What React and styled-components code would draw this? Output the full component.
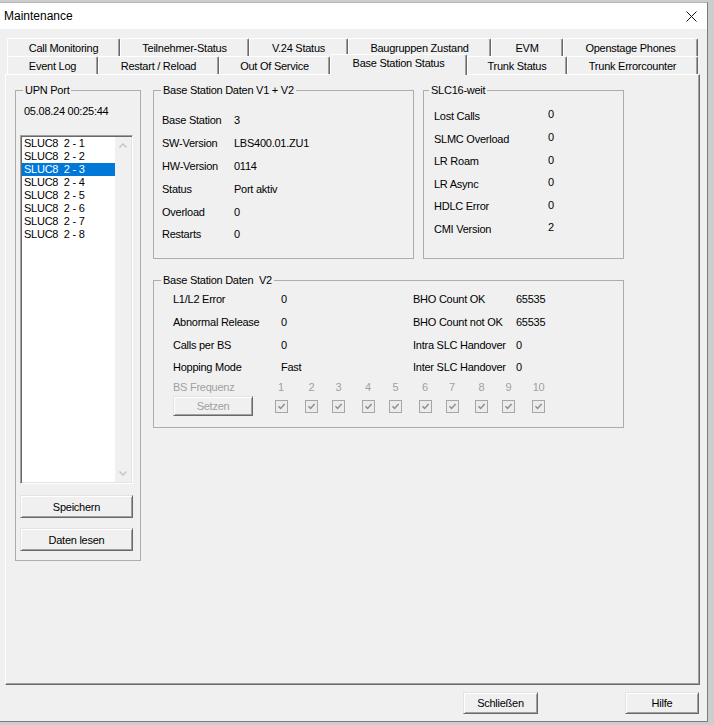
import React from "react";
import styled, { createGlobalStyle } from "styled-components";

const GlobalStyle = createGlobalStyle`
  html, body {
    margin: 0;
    padding: 0;
    background: #cdcdcd;
  }
  body {
    font-family: "Liberation Sans", Arial, sans-serif;
    font-size: 11px;
    letter-spacing: -0.25px;
    color: #000;
  }
  * {
    box-sizing: border-box;
  }
`;

const Window = styled.div`
  width: 708px;
  height: 720px;
  margin-top: 2px;
  border-top: 1px solid #b5b5b5;
  border-right: 1px solid #7a7a7a;
  border-bottom: 1px solid #7a7a7a;
  background: #f0f0f0;
  display: flex;
  flex-direction: column;
`;

const TitleBar = styled.div`
  height: 26px;
  flex: none;
  background: #fff;
  display: flex;
  align-items: center;
  justify-content: space-between;
  padding: 0 10px 0 4px;
  font-size: 12px;
  letter-spacing: 0;
`;

const Client = styled.div`
  flex: 1;
  display: flex;
  flex-direction: column;
  padding: 9px 7px 7px 5px;
`;

const TabStrip = styled.div`
  margin-left: 2px;
  display: flex;
  flex-direction: column;
`;

const TabRow = styled.div`
  display: flex;
  align-items: flex-start;
  height: 18px;
`;

const Tab = styled.div`
  flex: none;
  width: ${(p) => p.$w}px;
  height: ${(p) => (p.$active ? 21 : 18)}px;
  margin-top: ${(p) => (p.$active ? -2 : 0)}px;
  padding-top: ${(p) => (p.$active ? 2 : 3)}px;
  position: ${(p) => (p.$active ? "relative" : "static")};
  z-index: ${(p) => (p.$active ? 2 : "auto")};
  background: #f0f0f0;
  border-top: 1px solid #fff;
  border-left: 1px solid #fff;
  border-right: 1px solid #696969;
  box-shadow: inset -1px 0 0 #a0a0a0;
  border-radius: 2px 2px 0 0;
  text-align: center;
  line-height: 13px;
  white-space: nowrap;
`;

const Panel = styled.div`
  width: 695px;
  height: 611px;
  flex: none;
  display: flex;
  gap: 12px;
  padding: 9px 0 0 9px;
  border-top: 1px solid #fff;
  border-left: 1px solid #fff;
  border-right: 1px solid #696969;
  border-bottom: 1px solid #696969;
  box-shadow: inset -1px -1px 0 #a0a0a0;
`;

const Group = styled.fieldset`
  margin: ${(p) => p.$mt || 0}px 0 0 0;
  min-width: 0;
  width: ${(p) => p.$w}px;
  height: ${(p) => p.$h}px;
  padding: 0;
  border: 1px solid #adadad;
  flex: none;
`;

const Legend = styled.legend`
  margin-left: ${(p) => p.$ml ?? 7}px;
  padding: 0 2px;
  line-height: 13px;
`;

const GroupBody = styled.div`
  padding: ${(p) => p.$pad};
  display: flex;
  flex-direction: column;
  align-items: flex-start;
`;

const DateText = styled.div`
  margin-top: 8px;
  padding-left: 4px;
  line-height: 13px;
`;

const ListBox = styled.div`
  margin-top: 17px;
  width: 113px;
  height: 349px;
  display: flex;
  padding: 1px;
  background: #fff;
  border-top: 1px solid #a0a0a0;
  border-left: 1px solid #a0a0a0;
  border-right: 1px solid #fff;
  border-bottom: 1px solid #fff;
  box-shadow: inset 1px 1px 0 #696969, inset -1px -1px 0 #e3e3e3;
`;

const Items = styled.div`
  width: 93px;
  flex: none;
  display: flex;
  flex-direction: column;
`;

const Item = styled.div`
  height: 13px;
  line-height: 13px;
  padding-left: 2px;
  white-space: pre;
  background: ${(p) => (p.$selected ? "#0078d7" : "transparent")};
  color: ${(p) => (p.$selected ? "#fff" : "#000")};
`;

const ScrollBar = styled.div`
  flex: 1;
  background: #f0f0f0;
  display: flex;
  flex-direction: column;
  justify-content: space-between;
`;

const ScrollArrow = styled.div`
  height: 17px;
  display: flex;
  align-items: center;
  justify-content: center;
`;

const Button = styled.button`
  width: ${(p) => p.$w}px;
  height: ${(p) => p.$h}px;
  margin-top: ${(p) => p.$mt || 0}px;
  flex: none;
  padding: 0;
  font: inherit;
  letter-spacing: inherit;
  color: ${(p) => (p.disabled ? "#a0a0a0" : "#000")};
  background: #f0f0f0;
  border: 1px solid;
  border-color: #e3e3e3 #696969 #696969 #e3e3e3;
  box-shadow: inset 1px 1px 0 #fff, inset -1px -1px 0 #a0a0a0;
`;

const RightCol = styled.div`
  display: flex;
  flex-direction: column;
`;

const TopRow = styled.div`
  display: flex;
  gap: 9px;
`;

const InfoRow = styled.div`
  display: flex;
  align-items: center;
  height: ${(p) => p.$h}px;
`;

const Label = styled.div`
  width: ${(p) => p.$w}px;
  flex: none;
`;

const Value = styled.div`
  padding-bottom: ${(p) => p.$raise || 0}px;
`;

const V2Grid = styled.div`
  display: grid;
  grid-template-columns: 108px 132px 103px auto;
  grid-auto-rows: 22.7px;
  align-items: center;
`;

const FreqRow = styled.div`
  display: flex;
  align-items: center;
  height: ${(p) => p.$h}px;
  margin-top: ${(p) => p.$mt}px;
  color: #a0a0a0;
`;

const FreqLead = styled.div`
  width: 98px;
  flex: none;
  display: flex;
`;

const FreqCell = styled.div`
  width: 20px;
  flex: none;
  margin-left: ${(p) => p.$ml}px;
  display: flex;
  justify-content: center;
`;

const CheckBox = styled.span`
  width: 13px;
  height: 13px;
  border: 1px solid #a6a6a6;
  background: #ececec;
  display: flex;
  align-items: center;
  justify-content: center;
`;

const ButtonBar = styled.div`
  margin-top: 7px;
  height: 22px;
  display: flex;
  justify-content: flex-end;
  gap: 87px;
  padding-right: 1px;
`;

const rowOne = [
  ["Call Monitoring", 113],
  ["Teilnehmer-Status", 129],
  ["V.24 Status", 99],
  ["Baugruppen Zustand", 143],
  ["EVM", 72],
  ["Openstage Phones", 135],
];

const rowTwo = [
  ["Event Log", 91],
  ["Restart / Reload", 121],
  ["Out Of Service", 111],
  ["Base Station Status", 137, true],
  ["Trunk Status", 100],
  ["Trunk Errorcounter", 131],
];

const ports = [1, 2, 3, 4, 5, 6, 7, 8].map((n) => `SLUC8  2 - ${n}`);

const v1v2 = [
  ["Base Station", "3"],
  ["SW-Version", "LBS400.01.ZU1"],
  ["HW-Version", "0114"],
  ["Status", "Port aktiv"],
  ["Overload", "0"],
  ["Restarts", "0"],
];

const slc = [
  ["Lost Calls", "0"],
  ["SLMC Overload", "0"],
  ["LR Roam", "0"],
  ["LR Async", "0"],
  ["HDLC Error", "0"],
  ["CMI Version", "2"],
];

const v2 = [
  ["L1/L2 Error", "0", "BHO Count OK", "65535"],
  ["Abnormal Release", "0", "BHO Count not OK", "65535"],
  ["Calls per BS", "0", "Intra SLC Handover", "0"],
  ["Hopping Mode", "Fast", "Inter SLC Handover", "0"],
];

// gaps between the 20px wide frequency columns
const freqGaps = [0, 10.5, 7, 9.5, 7.5, 9.5, 7, 9.5, 7, 10];

function Chevron({ up }) {
  return (
    <svg width="8" height="5" viewBox="0 0 8 5">
      <path
        d={up ? "M0.5 4.5 L4 1 L7.5 4.5" : "M0.5 0.5 L4 4 L7.5 0.5"}
        fill="none"
        stroke="#c4c4c4"
        strokeWidth="1.4"
      />
    </svg>
  );
}

function Check() {
  return (
    <svg width="9" height="9" viewBox="0 0 9 9">
      <path d="M1.5 4.2 L3.6 6.4 L7.6 2" fill="none" stroke="#8e8e8e" strokeWidth="1.5" />
    </svg>
  );
}

export default function App() {
  return (
    <>
      <GlobalStyle />
      <Window>
        <TitleBar>
          <span>Maintenance</span>
          <svg width="11" height="11" viewBox="0 0 11 11">
            <path d="M0.5 0.5 L10.5 10.5 M10.5 0.5 L0.5 10.5" stroke="#111" strokeWidth="1" />
          </svg>
        </TitleBar>

        <Client>
          <TabStrip>
            <TabRow>
              {rowOne.map(([name, w]) => (
                <Tab key={name} $w={w}>{name}</Tab>
              ))}
            </TabRow>
            <TabRow>
              {rowTwo.map(([name, w, active]) => (
                <Tab key={name} $w={w} $active={active}>{name}</Tab>
              ))}
            </TabRow>
          </TabStrip>

          <Panel>
            <Group $w={126} $h={477}>
              <Legend>UPN Port</Legend>
              <GroupBody $pad="0 7px 0 4px">
                <DateText>05.08.24 00:25:44</DateText>
                <ListBox>
                  <Items>
                    {ports.map((p, i) => (
                      <Item key={p} $selected={i === 2}>{p}</Item>
                    ))}
                  </Items>
                  <ScrollBar>
                    <ScrollArrow><Chevron up /></ScrollArrow>
                    <ScrollArrow><Chevron /></ScrollArrow>
                  </ScrollBar>
                </ListBox>
                <Button $w={113} $h={23} $mt={11}>Speichern</Button>
                <Button $w={113} $h={23} $mt={10}>Daten lesen</Button>
              </GroupBody>
            </Group>

            <RightCol>
              <TopRow>
                <Group $w={261} $h={175}>
                  <Legend>Base Station Daten V1 + V2</Legend>
                  <GroupBody $pad="12px 0 0 8px">
                    {v1v2.map(([k, v]) => (
                      <InfoRow key={k} $h={22.8}>
                        <Label $w={72}>{k}</Label>
                        <Value>{v}</Value>
                      </InfoRow>
                    ))}
                  </GroupBody>
                </Group>
                <Group $w={201} $h={175}>
                  <Legend $ml={5}>SLC16-weit</Legend>
                  <GroupBody $pad="7.7px 0 0 10px">
                    {slc.map(([k, v]) => (
                      <InfoRow key={k} $h={22.6}>
                        <Label $w={114}>{k}</Label>
                        <Value $raise={3}>{v}</Value>
                      </InfoRow>
                    ))}
                  </GroupBody>
                </Group>
              </TopRow>

              <Group $w={471} $h={154} $mt={15}>
                <Legend>Base Station Daten&nbsp; V2</Legend>
                <GroupBody $pad="1px 0 0 19px">
                  <V2Grid>
                    {v2.map((r) =>
                      r.map((c, i) => <div key={r[0] + i}>{c}</div>)
                    )}
                  </V2Grid>
                  <FreqRow $h={13} $mt={1.5}>
                    <FreqLead>BS Frequenz</FreqLead>
                    {freqGaps.map((g, i) => (
                      <FreqCell key={i} $ml={g}>{i + 1}</FreqCell>
                    ))}
                  </FreqRow>
                  <FreqRow $h={20} $mt={3}>
                    <FreqLead>
                      <Button $w={80} $h={20} disabled>Setzen</Button>
                    </FreqLead>
                    {freqGaps.map((g, i) => (
                      <FreqCell key={i} $ml={g}>
                        <CheckBox><Check /></CheckBox>
                      </FreqCell>
                    ))}
                  </FreqRow>
                </GroupBody>
              </Group>
            </RightCol>
          </Panel>

          <ButtonBar>
            <Button $w={75} $h={22}>Schließen</Button>
            <Button $w={74} $h={22}>Hilfe</Button>
          </ButtonBar>
        </Client>
      </Window>
    </>
  );
}
